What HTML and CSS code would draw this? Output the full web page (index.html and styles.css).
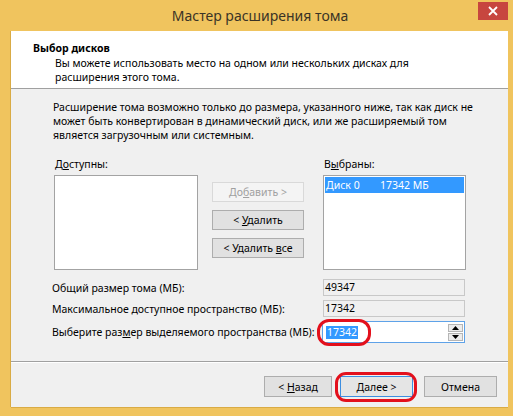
FILE: index.html
```html
<!DOCTYPE html>
<html lang="ru">
<head>
<meta charset="utf-8">
<title>Мастер расширения тома</title>
<link rel="stylesheet" href="styles.css">
</head>
<body>
<div class="window">
  <div class="titlebar">
    <div class="title">Мастер расширения тома</div>
    <div class="close">
      <svg width="10" height="10" viewBox="0 0 10 10"><path d="M1 1L9 9M9 1L1 9" stroke="#fff" stroke-width="1.8"/></svg>
    </div>
  </div>
  <div class="client">
    <div class="header">
      <div class="h-title">Выбор дисков</div>
      <div class="h-desc">Вы можете использовать место на одном или нескольких дисках для<br>расширения этого тома.</div>
    </div>
    <div class="body">
      <p class="note">Расширение тома возможно только до размера, указанного ниже, так как диск не<br>может быть конвертирован в динамический диск, или же расширяемый том<br>является загрузочным или системным.</p>
      <div class="picker">
        <div class="lbl">Д<u>о</u>ступны:</div>
        <div></div>
        <div class="lbl">В<u>ы</u>браны:</div>
        <div class="listbox"></div>
        <div class="movebtns">
          <div class="btn disabled"><span>До<u>б</u>авить &gt;</span></div>
          <div class="btn"><span>&lt; <u>У</u>далить</span></div>
          <div class="btn"><span>&lt; Удалить <u>в</u>се</span></div>
        </div>
        <div class="listbox">
          <div class="item sel"><span class="c1">Диск 0</span><span>17342 МБ</span></div>
        </div>
      </div>
      <div class="fields">
        <div class="flabel">Общий размер тома (МБ):</div>
        <div class="ro">49347</div>
        <div class="flabel">Максимальное доступное пространство (МБ):</div>
        <div class="ro">17342</div>
        <div class="flabel">Выберите раз<u>м</u>ер выделяемого пространства (МБ):</div>
        <div class="spin">
          <span class="seltext">17342</span>
          <div class="spinbtns">
            <div class="sb"><svg width="7" height="4" viewBox="0 0 7 4"><path d="M0 4L3.5 0L7 4Z" fill="#000"/></svg></div>
            <div class="sb"><svg width="7" height="4" viewBox="0 0 7 4"><path d="M0 0L7 0L3.5 4Z" fill="#000"/></svg></div>
          </div>
          <span class="mark"></span>
        </div>
      </div>
    </div>
    <div class="footer">
      <div class="btn back"><span>&lt; <u>Н</u>азад</span></div>
      <div class="btn next"><span><u>Д</u>алее &gt;</span></div>
      <div class="btn cancel"><span>Отмена</span></div>
    </div>
  </div>
</div>
</body>
</html>
```

FILE: styles.css
```css
* { box-sizing: border-box; }
html, body { margin: 0; padding: 0; }
body {
  font-family: "Noto Sans", "DejaVu Sans", sans-serif;
  font-size: 10.5px;
  color: #000;
  background: #f0c45e;
}
u { text-decoration: underline; text-underline-offset: 1px; }

.window {
  width: 513px;
  height: 416px;
  background: #f0c45e;
  display: flex;
  flex-direction: column;
}

.titlebar {
  height: 31px;
  flex: none;
  display: flex;
  align-items: flex-start;
}
.title {
  flex: 1;
  padding-left: 42px;
  text-align: center;
  font-size: 14px;
  line-height: 31px;
  color: #3a3326;
}
.close {
  width: 30px;
  height: 18px;
  margin-top: 2px;
  margin-right: 5px;
  background: #c7463f;
  display: flex;
  align-items: center;
  justify-content: center;
}
.close svg { display: block; }

.client {
  flex: 1;
  margin: 0 5px 9px 11px;
  background: #f0f0f0;
  display: flex;
  flex-direction: column;
  box-shadow: -1px 0 0 #d9ab45, 0 1px 0 #d9ab45;
}

.header {
  height: 58px;
  flex: none;
  background: #fff;
  border-bottom: 1px solid #a0a0a0;
  padding: 10px 0 0 22px;
  line-height: 14px;
}
.h-title { font-weight: bold; }
.h-desc { margin: 1px 0 0 22px; }

.body {
  flex: 1;
  padding: 11px 0 0 42px;
}
.note {
  margin: 0;
  line-height: 14px;
}

.picker {
  display: grid;
  grid-template-columns: 144px 125px 143px;
  margin: 15px 0 0 1px;
}
.lbl {
  line-height: 14px;
  margin-bottom: 4px;
  padding-left: 1px;
}
.listbox {
  height: 95px;
  background: #fff;
  border: 1px solid #a3a3a3;
  padding: 1px;
}
.movebtns {
  display: flex;
  flex-direction: column;
  gap: 8px;
  padding: 7px 0 0 14px;
  width: 106px;
}
.btn {
  height: 20px;
  background: #e1e1e1;
  border: 1px solid #adadad;
  display: flex;
  align-items: center;
  justify-content: center;
  line-height: 14px;
  white-space: pre;
}
.btn.disabled {
  background: #f4f4f4;
  border-color: #d9d9d9;
  color: #a0a0a0;
}
.item {
  height: 16px;
  display: flex;
  align-items: center;
  padding-left: 1px;
  line-height: 14px;
}
.item.sel { background: #3399ff; color: #fff; }
.item .c1 { width: 54px; }

.fields {
  display: grid;
  grid-template-columns: 270px 143px;
  row-gap: 4px;
  align-items: center;
  margin: 9px 0 0 -1px;
}
.flabel { line-height: 14px; }
.ro {
  height: 17px;
  margin-left: 1px;
  border: 1px solid #c8c8c8;
  background: #f0f0f0;
  padding-left: 1px;
  line-height: 15px;
}
.spin {
  position: relative;
  height: 22px;
  background: #fff;
  border: 1px solid #5ea2e8;
  display: flex;
  align-items: center;
  padding-left: 3px;
}
.seltext {
  background: #3399ff;
  color: #fff;
  line-height: 13px;
  padding: 0 1px;
}
.spinbtns {
  margin-left: auto;
  margin-right: 1px;
  width: 15px;
  display: flex;
  flex-direction: column;
  gap: 1px;
}
.sb {
  height: 8px;
  background: #ececec;
  border: 1px solid #b5b5b5;
  display: flex;
  align-items: center;
  justify-content: center;
}
.sb svg { display: block; }
.mark {
  position: absolute;
  left: -6px;
  top: -3px;
  width: 54px;
  height: 27px;
  border: 3px solid #e3101c;
  border-radius: 12px;
}

.footer {
  height: 46px;
  flex: none;
  border-top: 1px solid #a0a0a0;
  box-shadow: inset 0 1px 0 #fff;
  display: flex;
  justify-content: flex-end;
  align-items: flex-start;
  padding: 14px 11px 0 0;
}
.footer .btn { height: 21px; }
.back { width: 68px; margin-right: 8px; }
.next {
  width: 73px;
  margin-right: 11px;
  position: relative;
  border-color: #3d8ee0;
  background: #e5e5e5;
}
.next::after {
  content: "";
  position: absolute;
  left: -6px;
  top: -5px;
  right: -5px;
  bottom: -6px;
  border: 3px solid #e3101c;
  border-radius: 11px;
}
.cancel { width: 73px; }
```
